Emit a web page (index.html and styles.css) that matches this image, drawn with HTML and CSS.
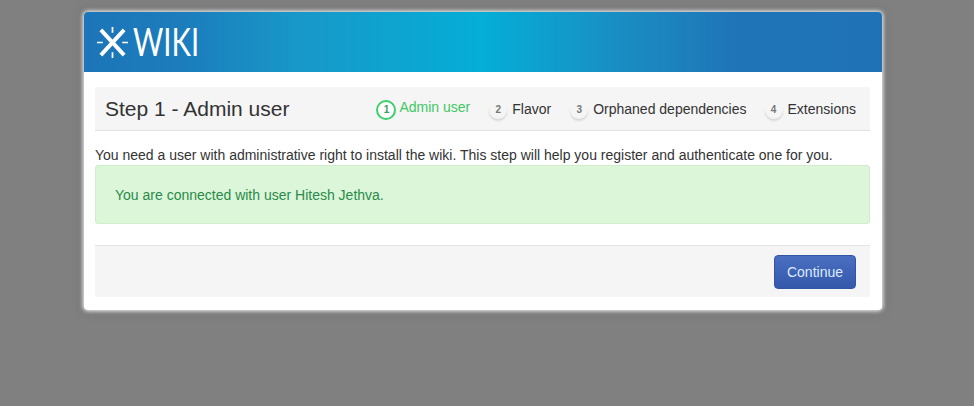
FILE: index.html
```html
<!DOCTYPE html>
<html lang="en">
<head>
<meta charset="utf-8">
<title>XWiki</title>
<link rel="stylesheet" href="styles.css">
</head>
<body>
<main class="card">
  <header class="banner">
    <div class="logo">
      <svg class="logo-mark" width="31" height="31" viewBox="0 0 32 32" aria-hidden="true">
        <g stroke="#fff" fill="none">
          <path d="M4 3 L28 29 M28 3 L4 29" stroke-width="4"/>
          <path d="M16 0 V6 M16 26 V32 M0 16 H6 M26 16 H32" stroke-width="1.8"/>
        </g>
      </svg>
      <span class="logo-text">WIKI</span>
    </div>
  </header>
  <div class="body">
    <div class="steps-bar">
      <h1 class="title">Step 1 - Admin user</h1>
      <ol class="steps">
        <li class="step active"><span class="num">1</span><span class="label">Admin user</span></li>
        <li class="step"><span class="num">2</span><span class="label">Flavor</span></li>
        <li class="step"><span class="num">3</span><span class="label">Orphaned dependencies</span></li>
        <li class="step last"><span class="num">4</span><span class="label">Extensions</span></li>
      </ol>
    </div>
    <p class="intro">You need a user with administrative right to install the wiki. This step will help you register and authenticate one for you.</p>
    <div class="alert">You are connected with user Hitesh Jethva.</div>
    <div class="actions"><button class="btn" type="button">Continue</button></div>
  </div>
</main>
</body>
</html>
```
FILE: styles.css
```css
* { box-sizing: border-box; }
html, body { height: 100%; }
body {
  margin: 0;
  background: #808080;
  font-family: "Liberation Sans", Arial, sans-serif;
  font-size: 14px;
  line-height: 20px;
  color: #333;
  overflow: hidden;
}
.card {
  width: 798px;
  height: 298px;
  margin: 12px 0 0 84px;
  background: #fff;
  border-radius: 4px;
  box-shadow: 0 0 4px 1px rgba(255,255,255,.95), 0 0 10px 3px rgba(100,100,100,.45);
  overflow: hidden;
}
.banner {
  height: 60px;
  padding: 14px 0 0 13px;
  background: linear-gradient(90deg, #1c75b8 0%, #1c7cbc 12%, #1898c8 27%, #04aed7 50%, #1a8cc2 68%, #1f74b7 82%, #1f72b6 100%);
}
.logo { display: flex; align-items: center; height: 32px; color: #fff; }
.logo-mark { flex: none; }
.logo-text {
  margin: -2px 0 0 5px;
  font-family: Lato, "Liberation Sans", sans-serif;
  font-size: 38px;
  line-height: 32px;
  font-weight: 400;
  transform: scaleX(.77);
  transform-origin: left;
}
.body { padding: 15px 12px 0 11px; }
.steps-bar {
  display: flex;
  align-items: center;
  justify-content: space-between;
  height: 44px;
  padding: 0 14px 0 10px;
  background: #f5f5f5;
  border-bottom: 1px solid #e3e3e3;
}
.title { margin: 0; font-size: 21px; font-weight: 400; line-height: 24px; color: #333; }
.steps { display: flex; gap: 19px; margin: 0; padding: 0; list-style: none; }
.step { display: flex; align-items: center; gap: 5px; height: 22px; }
.step.last { margin-left: -1px; }
.num {
  display: flex;
  align-items: center;
  justify-content: center;
  width: 18px;
  height: 18px;
  margin-top: 2px;
  border-radius: 50%;
  font-size: 10px;
  font-weight: 700;
  color: #777;
  background: #f5f5f5;
  box-shadow: 0 2px 2px rgba(0,0,0,.12);
}
.step.active { gap: 3px; }
.step.active .num {
  width: 20px;
  height: 20px;
  border: 2px solid #3ccf6c;
  color: #3c9a5c;
  background: #fff;
  box-shadow: none;
}
.step.active .label { color: #3fc765; margin-top: -3px; }
.intro { margin: 14px 0 0; height: 20px; }
.alert {
  height: 59px;
  margin-top: 0;
  padding: 19px 19px;
  background: #dbf6d8;
  border: 1px solid #cfeec9;
  border-radius: 3px;
  color: #2a8a4a;
}
.actions {
  display: flex;
  justify-content: flex-end;
  align-items: flex-start;
  height: 52px;
  margin-top: 21px;
  padding: 9px 14px 0;
  background: #f5f5f5;
  border-top: 1px solid #e5e5e5;
}
.btn {
  width: 82px;
  height: 34px;
  padding: 0;
  border: 1px solid #2f55a4;
  border-radius: 4px;
  background: linear-gradient(#4a6fc0, #3458aa);
  color: #dfeaff;
  font: 14px/20px "Liberation Sans", Arial, sans-serif;
}
```
